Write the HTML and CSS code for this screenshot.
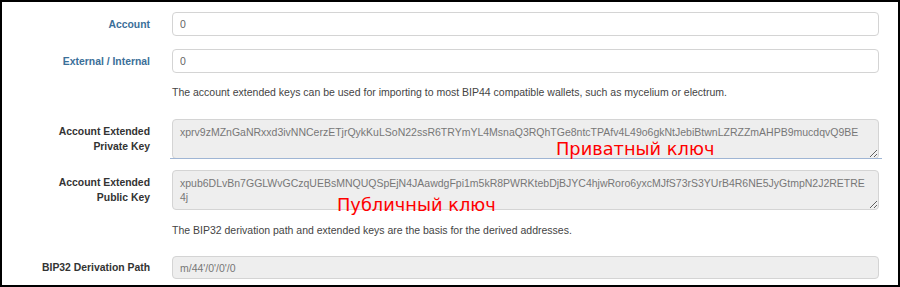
FILE: index.html
```html
<!DOCTYPE html>
<html>
<head>
<meta charset="utf-8">
<link rel="stylesheet" href="styles.css">
</head>
<body>
<div class="frame">
  <div class="form">
    <div class="row row-account">
      <label class="label label-blue">Account</label>
      <input class="field" type="text" value="0">
    </div>
    <div class="row row-ext">
      <label class="label label-blue">External / Internal</label>
      <input class="field" type="text" value="0">
    </div>
    <div class="row row-help1">
      <span></span>
      <p class="help">The account extended keys can be used for importing to most BIP44 compatible wallets, such as mycelium or electrum.</p>
    </div>
    <div class="row row-priv">
      <label class="label label-multi">Account Extended<br>Private Key</label>
      <div class="area-wrap area-underline">
        <textarea class="area" readonly>xprv9zMZnGaNRxxd3ivNNCerzETjrQykKuLSoN22ssR6TRYmYL4MsnaQ3RQhTGe8ntcTPAfv4L49o6gkNtJebiBtwnLZRZZmAHPB9mucdqvQ9BE</textarea>
      </div>
    </div>
    <div class="row row-pub">
      <label class="label label-multi">Account Extended<br>Public Key</label>
      <div class="area-wrap">
        <textarea class="area" readonly>xpub6DLvBn7GGLWvGCzqUEBsMNQUQSpEjN4JAawdgFpi1m5kR8PWRKtebDjBJYC4hjwRoro6yxcMJfS73rS3YUrB4R6NE5JyGtmpN2J2RETRE4j</textarea>
      </div>
    </div>
    <div class="row row-help2">
      <span></span>
      <p class="help">The BIP32 derivation path and extended keys are the basis for the derived addresses.</p>
    </div>
    <div class="row row-path">
      <label class="label">BIP32 Derivation Path</label>
      <input class="field field-ro" type="text" value="m/44'/0'/0'/0" readonly>
    </div>
  </div>
  <span class="note note-priv">Приватный ключ</span>
  <span class="note note-pub">Публичный ключ</span>
</div>
</body>
</html>
```
FILE: styles.css
```css
html, body {
  margin: 0;
  padding: 0;
  background: #fff;
}

.frame {
  position: relative;
  width: 900px;
  height: 287px;
  box-sizing: border-box;
  border: 2px solid #000;
  padding-top: 10px;
  overflow: hidden;
  font-family: "Liberation Sans", Arial, sans-serif;
  font-size: 10.5px;
  color: #333;
}

.form {
  display: flex;
  flex-direction: column;
}

.row {
  display: grid;
  grid-template-columns: 148px 707px;
  column-gap: 22px;
  align-items: center;
}

.row-ext { margin-top: 13px; }
.row-help1 { margin-top: 12px; }
.row-priv { margin-top: 19px; align-items: start; }
.row-pub { margin-top: 11px; align-items: start; }
.row-help2 { margin-top: 13px; }
.row-path { margin-top: 18px; }

.label {
  text-align: right;
  font-weight: bold;
  font-size: 10.4px;
  color: #333;
  line-height: 15px;
}

.label-blue {
  color: #3b6f99;
}

.label-multi {
  padding-top: 5px;
}

.field {
  box-sizing: border-box;
  width: 707px;
  height: 24px;
  margin: 0;
  padding: 0 7px;
  border: 1px solid #d4d4d4;
  border-radius: 4px;
  background: #fff;
  font-family: "Liberation Sans", Arial, sans-serif;
  font-size: 10.5px;
  color: #666;
  outline: none;
}

.field-ro {
  background: #eee;
  color: #777;
  height: 23px;
}

.help {
  margin: 0;
  line-height: 15px;
  color: #444;
}

.area-wrap {
  position: relative;
  width: 707px;
  height: 40px;
}

.area-underline::after {
  content: "";
  position: absolute;
  left: -2px;
  right: -3px;
  bottom: 0;
  height: 1px;
  background: #9fb5d4;
}

.area {
  display: block;
  box-sizing: border-box;
  width: 707px;
  height: 40px;
  margin: 0;
  padding: 5px 12px 5px 7px;
  border: 1px solid #d4d4d4;
  border-radius: 4px;
  background: #eee;
  font-family: "Liberation Sans", Arial, sans-serif;
  font-size: 10.5px;
  line-height: 14px;
  color: #777;
  outline: none;
  overflow: hidden;
  word-break: break-all;
}

.note {
  position: absolute;
  font-family: "DejaVu Sans", sans-serif;
  font-size: 17.8px;
  line-height: 20px;
  color: #f00;
  white-space: nowrap;
}

.note-priv {
  left: 554px;
  top: 137px;
}

.note-pub {
  left: 335px;
  top: 193px;
}
```
